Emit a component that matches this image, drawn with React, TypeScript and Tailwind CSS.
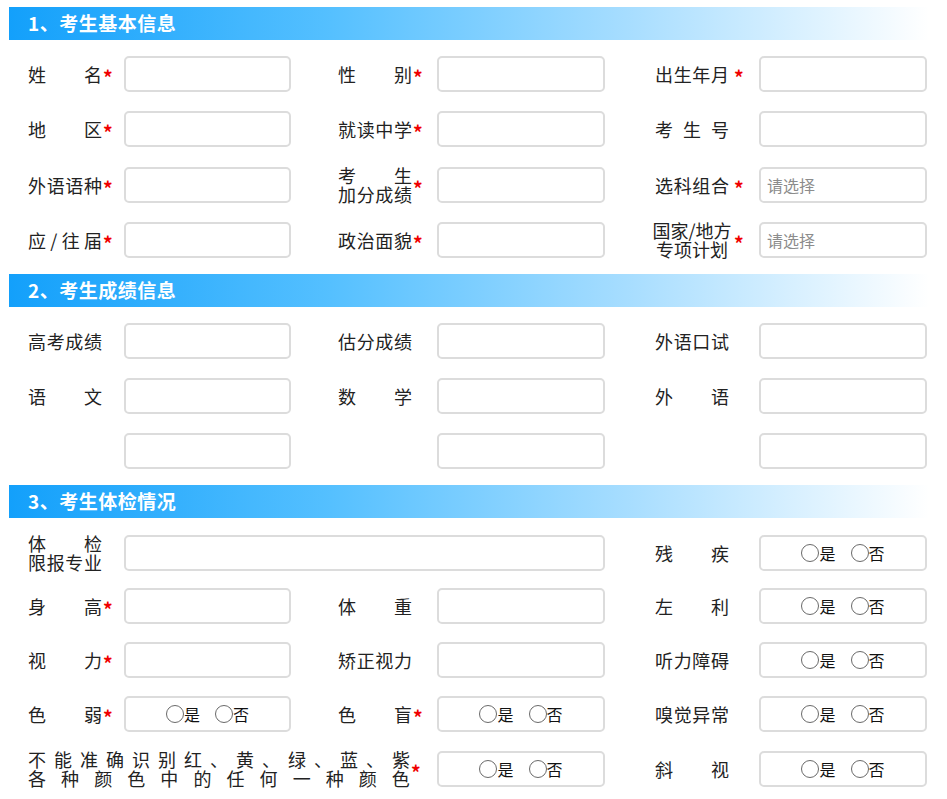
import React from "react";

// 8-column track: label | input | gap | label | input | gap | label | input
const GRID = "grid grid-cols-[96px_167px_47px_99px_168px_50px_104px_168px] items-center h-[36px]";

type LabelProps = {
  lines: string[];
  req?: boolean;
  center?: boolean;
  star?: "tight" | "loose";
  width?: string;
  className?: string;
};

function Label({ lines, req, center, star = "tight", width = "w-[74px]", className = "" }: LabelProps) {
  return (
    <div className={`flex items-center ${className}`}>
      <div className={`${width} flex flex-col leading-[19px]`}>
        {lines.map((line, i) =>
          center ? (
            <div key={i} className="flex justify-center whitespace-nowrap h-[19px]">{line}</div>
          ) : (
            <div key={i} className={`flex h-[19px] ${line.length > 1 ? "justify-between" : ""}`}>
              {Array.from(line).map((ch, j) => (
                <span key={j}>{ch}</span>
              ))}
            </div>
          )
        )}
      </div>
      {req && (
        <span className={`${star === "loose" ? "ml-[5px]" : "ml-[1px]"} text-[19px] font-bold text-[#f00000] leading-none translate-y-[2px]`}>*</span>
      )}
    </div>
  );
}

function Input({ placeholder, className = "" }: { placeholder?: string; className?: string }) {
  return (
    <input
      readOnly
      placeholder={placeholder}
      className={`h-[36px] w-full border-2 border-[#dcdcdc] rounded-[5px] bg-white px-[6px] text-[16px] outline-none placeholder:text-[#8c8c8c] ${className}`}
    />
  );
}

function Radio({ className = "" }: { className?: string }) {
  return (
    <div className={`h-[36px] w-full border-2 border-[#dcdcdc] rounded-[5px] bg-white flex items-center justify-center text-[16px] text-[#111] ${className}`}>
      <span className="w-[18px] h-[18px] rounded-full border border-[#6a6a6a]" />
      <span className="leading-none">是</span>
      <span className="ml-[15px] w-[18px] h-[18px] rounded-full border border-[#6a6a6a]" />
      <span className="leading-none">否</span>
    </div>
  );
}

function Header({ title }: { title: string }) {
  return (
    <div className="h-[33px] flex items-center pl-[19px] text-white font-bold text-[19px] tracking-[0.5px] bg-[linear-gradient(to_right,#13a0fb,#55c0ff_35%,#a9deff_68%,#ffffff)]">
      {title}
    </div>
  );
}

export default function App() {
  return (
    <div className="w-[947px] h-[799px] bg-white overflow-hidden pt-[7px] font-['Noto_Sans_CJK_SC',sans-serif] text-[18px] text-[#222]">
      <div className="ml-[9px] w-[920px]">
        <Header title="1、考生基本信息" />
      </div>
      <div className="pl-[28px] pt-[16px] pb-[17px] flex flex-col gap-[19px]">
        <div className={GRID}>
          <Label lines={["姓名"]} req />
          <Input />
          <Label className="col-start-4" lines={["性别"]} req />
          <Input />
          <Label className="col-start-7" lines={["出生年月"]} req star="loose" />
          <Input />
        </div>
        <div className={GRID}>
          <Label lines={["地区"]} req />
          <Input />
          <Label className="col-start-4" lines={["就读中学"]} req />
          <Input />
          <Label className="col-start-7" lines={["考生号"]} />
          <Input />
        </div>
        <div className={GRID}>
          <Label lines={["外语语种"]} req />
          <Input />
          <Label className="col-start-4" lines={["考生", "加分成绩"]} req />
          <Input />
          <Label className="col-start-7" lines={["选科组合"]} req star="loose" />
          <Input placeholder="请选择" />
        </div>
        <div className={GRID}>
          <Label lines={["应/往届"]} req />
          <Input />
          <Label className="col-start-4" lines={["政治面貌"]} req />
          <Input />
          <Label className="col-start-7" lines={["国家/地方", "专项计划"]} center req star="loose" />
          <Input placeholder="请选择" />
        </div>
      </div>

      <div className="ml-[9px] w-[920px]">
        <Header title="2、考生成绩信息" />
      </div>
      <div className="pl-[28px] pt-[16px] pb-[16px] flex flex-col gap-[19px]">
        <div className={GRID}>
          <Label lines={["高考成绩"]} />
          <Input />
          <Label className="col-start-4" lines={["估分成绩"]} />
          <Input />
          <Label className="col-start-7" lines={["外语口试"]} />
          <Input />
        </div>
        <div className={GRID}>
          <Label lines={["语文"]} />
          <Input />
          <Label className="col-start-4" lines={["数学"]} />
          <Input />
          <Label className="col-start-7" lines={["外语"]} />
          <Input />
        </div>
        <div className={GRID}>
          <div className="col-start-2"><Input /></div>
          <div className="col-start-5"><Input /></div>
          <div className="col-start-8"><Input /></div>
        </div>
      </div>

      <div className="ml-[9px] w-[920px]">
        <Header title="3、考生体检情况" />
      </div>
      <div className="pl-[28px] pt-[16px] flex flex-col gap-[18px]">
        <div className={GRID}>
          <Label lines={["体检", "限报专业"]} />
          <div className="col-span-4"><Input /></div>
          <Label className="col-start-7" lines={["残疾"]} />
          <Radio />
        </div>
        <div className={GRID}>
          <Label lines={["身高"]} req />
          <Input />
          <Label className="col-start-4" lines={["体重"]} />
          <Input />
          <Label className="col-start-7" lines={["左利"]} />
          <Radio />
        </div>
        <div className={GRID}>
          <Label lines={["视力"]} req />
          <Input />
          <Label className="col-start-4" lines={["矫正视力"]} />
          <Input />
          <Label className="col-start-7" lines={["听力障碍"]} />
          <Radio />
        </div>
        <div className={GRID}>
          <Label lines={["色弱"]} req />
          <Radio />
          <Label className="col-start-4" lines={["色盲"]} req />
          <Radio />
          <Label className="col-start-7" lines={["嗅觉异常"]} />
          <Radio />
        </div>
        <div className={GRID}>
          <Label
            className="col-span-4"
            width="w-[382px]"
            lines={["不能准确识别红、黄、绿、蓝、紫", "各种颜色中的任何一种颜色"]}
            req
          />
          <Radio />
          <Label className="col-start-7" lines={["斜视"]} />
          <Radio />
        </div>
      </div>
    </div>
  );
}
